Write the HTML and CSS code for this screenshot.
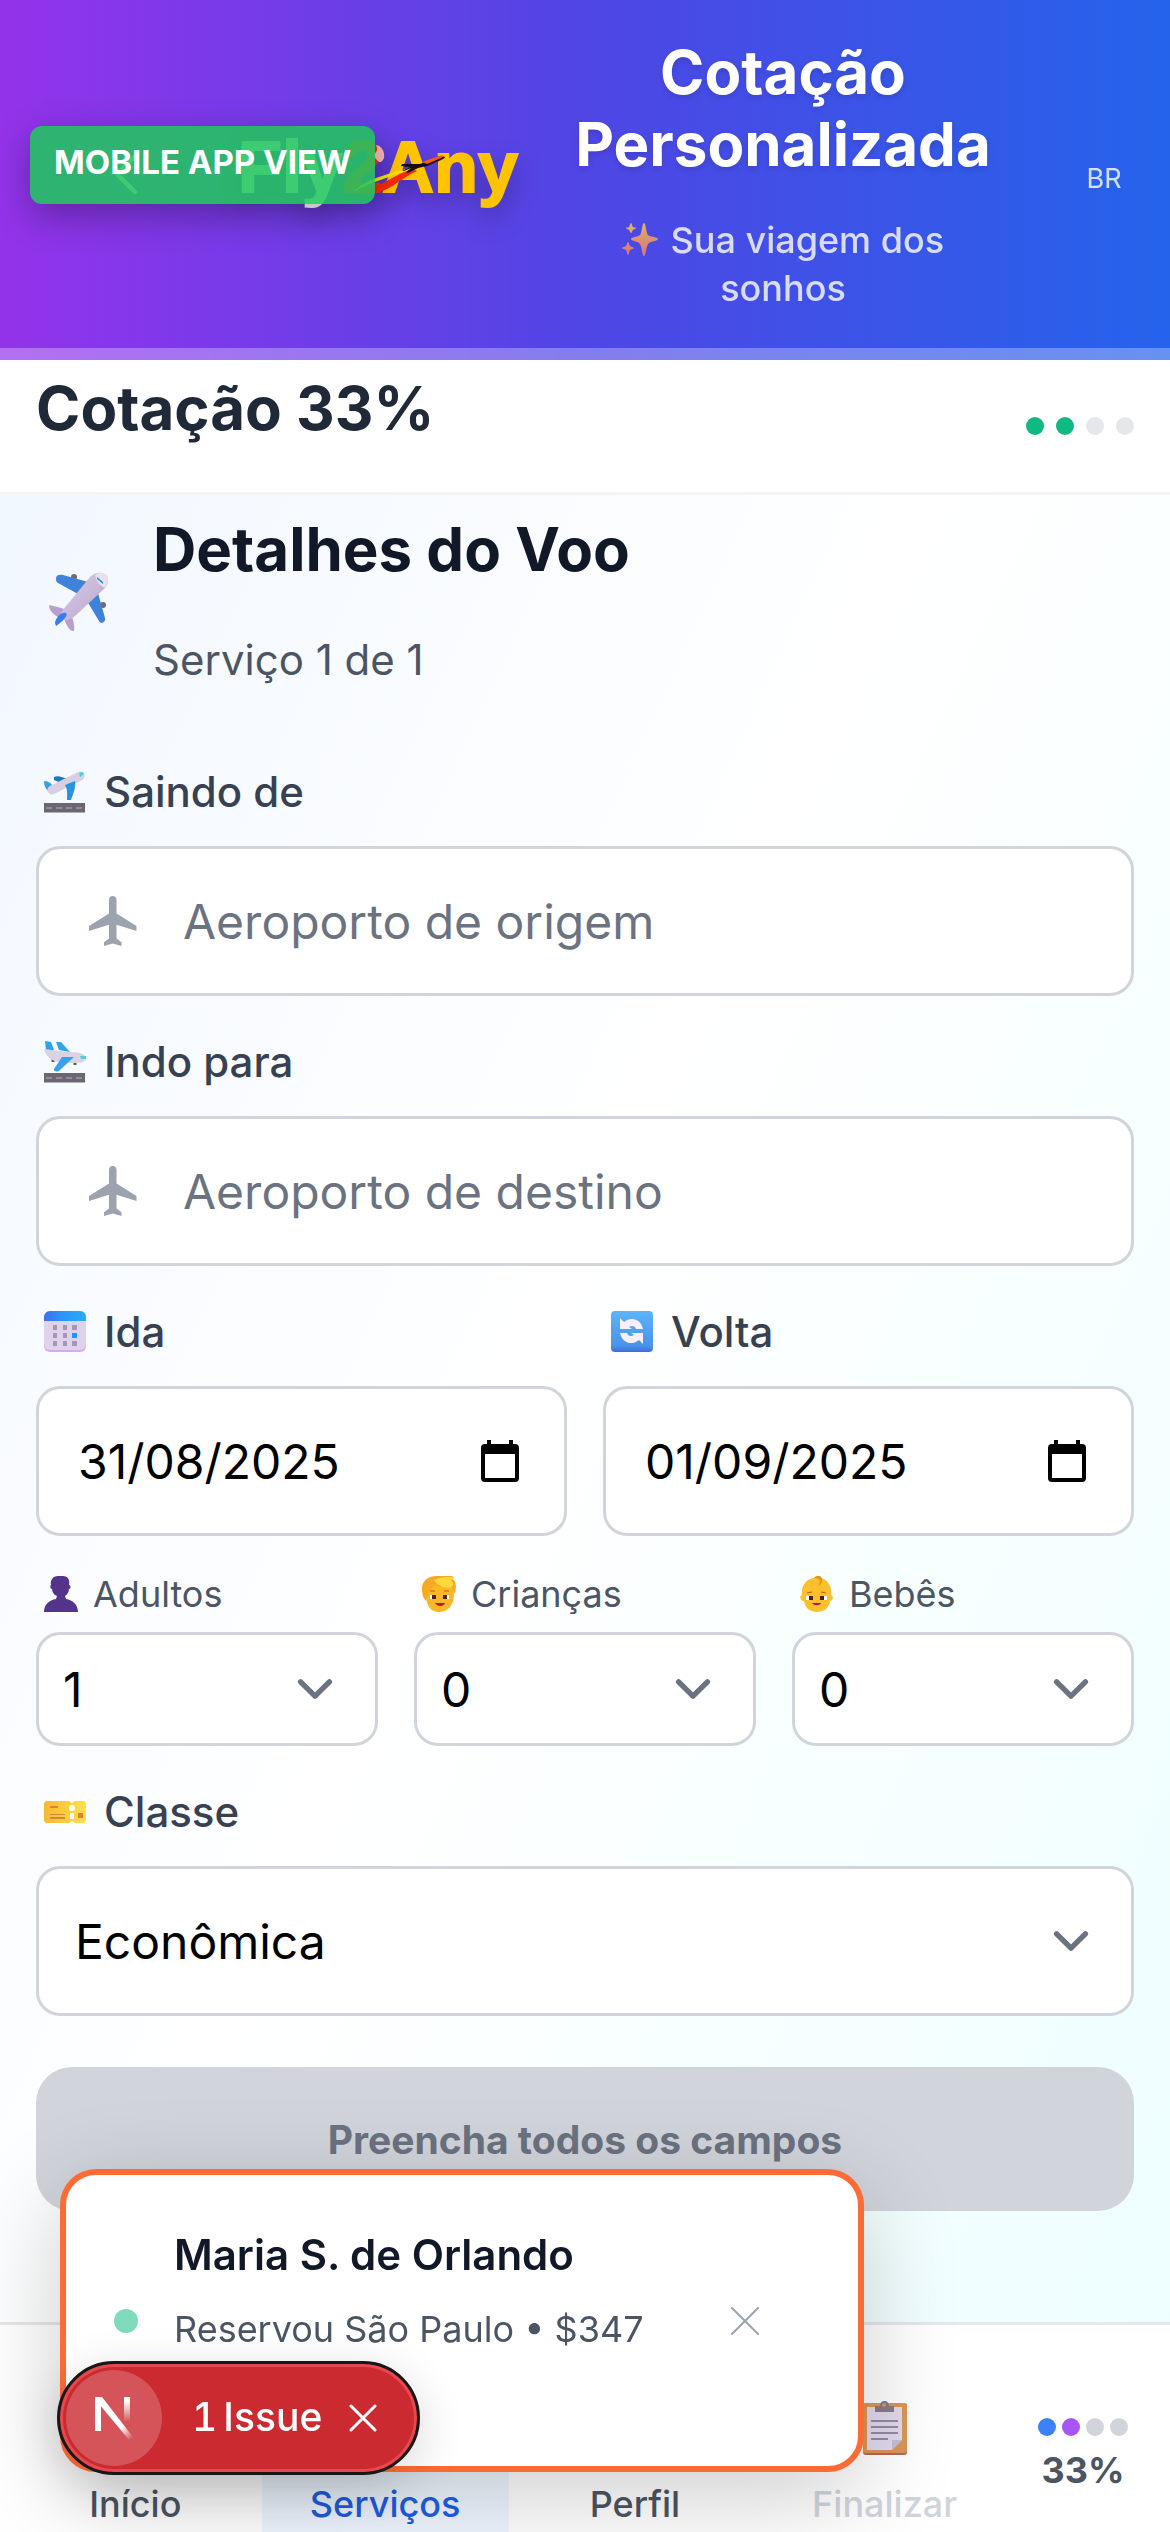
FILE: index.html
```html
<!DOCTYPE html>
<html lang="pt-BR">
<head>
<meta charset="utf-8">
<meta name="viewport" content="width=device-width, initial-scale=1">
<title>Cotação Personalizada</title>
<link rel="stylesheet" href="styles.css">
</head>
<body>
<header class="hero">
  <div class="hero-bar">
    <button class="back" type="button" aria-label="Voltar">
      <svg width="72" height="72" viewBox="0 0 24 24" fill="none" stroke="#fff" stroke-width="1.5" stroke-linecap="round" stroke-linejoin="round"><path d="M15 18l-6-6 6-6"/></svg>
    </button>
    <svg class="logo" width="324" height="120" viewBox="0 0 324 120" role="img" aria-label="Fly2Any">
      <text class="logo-text" x="22" y="78"><tspan class="logo-fly">Fly</tspan><tspan class="logo-two">2</tspan><tspan class="logo-any">Any</tspan></text>
      <path d="M160 31c6 1 9 7 8 13-2 5-5 5-7 2-3-3-3-5-1-8 2-2 1-4 0-7z" fill="#fbb8ae"/>
      <path d="M135 80c20-2 40-16 60-26l6 3c-18 8-28 22-48 23z" fill="#fb2a05"/>
      <path d="M137 78c18-16 38-18 59-25l2 2c-20 6-40 12-61 23z" fill="#ffe600"/>
      <path d="M186 57l8-4-9-1 1-2h18l8-3c7-4 13-6 17-4 0 1-2 2-6 4l-12 5-9 2-10 5-2-1 5-4-7 3z" fill="#140d0d"/>
      <path d="M206 48l17-6c5-1 6 0 2 2l-14 6z" fill="#fb5a10"/>
    </svg>
    <div class="hero-copy">
      <h1 class="hero-title">Cotação Personalizada</h1>
      <p class="hero-sub"><svg class="sparkles" width="36" height="33" viewBox="0 0 36 33" aria-hidden="true"><defs><linearGradient id="spark" x1="0" y1="0" x2="0" y2="1"><stop offset="0" stop-color="#ffcf4a"/><stop offset="1" stop-color="#ff7d5c"/></linearGradient></defs><path fill="url(#spark)" d="M22 0c2 0 2 10 4 12s10 2 10 4-8 2-10 5-2 12-4 12-2-9-4-12-9-3-9-5 7-2 9-4 2-12 4-12zM9 0c1 0 1 3 2 4s3 0 3 1-2 1-3 2-1 3-2 3-1-2-2-3-3-1-3-2 2 0 3-1 1-4 2-4zM6 19c1 0 1 3 2 4s4 1 4 2-3 1-4 2-1 5-2 5-1-4-2-5-4-1-4-2 3-1 4-2 1-4 2-4z"/></svg> Sua viagem dos sonhos</p>
    </div>
    <span class="locale">BR</span>
  </div>
  <div class="hero-strip"></div>
  <div class="view-badge">MOBILE APP VIEW</div>
</header>

<section class="status">
  <h2 class="status-title">Cotação 33%</h2>
  <div class="dots dots-wide"><i class="dot green"></i><i class="dot green"></i><i class="dot pale"></i><i class="dot pale"></i></div>
</section>

<main class="content">
  <div class="service">
    <svg class="service-icon" width="60" height="60" viewBox="0 0 60 60" aria-hidden="true">
      <defs><linearGradient id="body" x1="0" y1="0" x2="1" y2="1"><stop offset="0" stop-color="#d9cfe8"/><stop offset="1" stop-color="#b9a3cc"/></linearGradient></defs>
      <circle cx="26" cy="5" r="3" fill="#6d6a75"/><circle cx="55" cy="33" r="3" fill="#6d6a75"/>
      <path d="M8 6c0-3 4-4 7-3l25 7-10 12L10 11c-2-1-2-3-2-5z" fill="#3f82da"/>
      <path d="M50 21l7 25c1 4-4 7-6 3L39 29z" fill="#3f82da"/>
      <path d="M1 33c5 1 10 2 15 4l-3 10C8 44 1 40 1 33zM16 46l8-2c1 5 3 10 2 15-4 1-8-6-10-13z" fill="#b79fd0"/>
      <path d="M14 39L42 5c5-6 18-6 18 3 0 3-1 6-3 8L27 44c-5 4-10 5-12 3s-3-5-1-8z" fill="url(#body)"/>
      <path d="M47 3c5-4 13-2 13 5 0 3-1 5-3 8-5-2-9-7-10-13z" fill="#e9e0ec"/>
      <path d="M49 5l6 5v2l-6-5z" fill="#1595d3"/>
      <path d="M7 51c0-5 7-12 11-10 3 2-4 9-10 13z" fill="#3a7df0"/>
    </svg>
    <div class="service-copy">
      <h2 class="service-title">Detalhes do Voo</h2>
      <p class="service-step">Serviço 1 de 1</p>
    </div>
  </div>

  <form class="form">
    <div class="field">
      <label class="label" for="from">
        <svg width="42" height="42" viewBox="0 0 42 42" aria-hidden="true"><path d="M0 32h41v9.500H0z" fill="#6a6673"/><path d="M2 37h37" stroke="#b7b3bd" stroke-width="1" stroke-dasharray="6 4"/><path d="M10 6c4-2 8 0 14 2l-5 5-9-4z" fill="#2277b8"/><path d="M0 10c5 0 8 3 10 7l-6 3C1 17 0 14 0 10z" fill="#35a0e0"/><path d="M8 19L36 5" stroke="#d6d0e2" stroke-width="9" stroke-linecap="round"/><path d="M35 2l4-1 1 2-4 3z" fill="#3fd2e6"/><path d="M21 14l10-4c1 7-2 13-4 19h-4c0-5 1-10-2-15z" fill="#2b93dc"/></svg>
        <span>Saindo de</span>
      </label>
      <div class="box">
        <svg class="box-icon" width="60" height="60" viewBox="0 0 24 24" fill="#9ca3af" aria-hidden="true"><path d="M21 16v-2l-8-5V3.500c0-.83-.67-1.500-1.500-1.500S10 2.670 10 3.500V9l-8 5v2l8-2.500V19l-2 1.500V22l3.500-1 3.500 1v-1.500L13 19v-5.500l8 2.500z"/></svg>
        <input class="box-input" id="from" type="text" placeholder="Aeroporto de origem">
      </div>
    </div>

    <div class="field">
      <label class="label" for="to">
        <svg width="42" height="42" viewBox="0 0 42 42" aria-hidden="true"><path d="M0 32h41v9.500H0z" fill="#6a6673"/><path d="M2 37h37" stroke="#b7b3bd" stroke-width="1" stroke-dasharray="6 4"/><path d="M12 1h5l9 10-11-2zM1 0l6 1 3 8-8 1z" fill="#2ea3ee"/><path d="M9 18v3M31 21v3" stroke="#5b5663" stroke-width="3"/><path d="M0 8l24 3c9 0 18 1 18 6 0 4-5 5-12 5-12 0-27 0-30-14z" fill="#d9d3e3"/><path d="M36 15h6v3h-5z" fill="#48d0e4"/><path d="M18 16h12L16 29c-3 3-7 1-6-1z" fill="#36a2ee"/></svg>
        <span>Indo para</span>
      </label>
      <div class="box">
        <svg class="box-icon" width="60" height="60" viewBox="0 0 24 24" fill="#9ca3af" aria-hidden="true"><path d="M21 16v-2l-8-5V3.500c0-.83-.67-1.500-1.500-1.500S10 2.670 10 3.500V9l-8 5v2l8-2.500V19l-2 1.500V22l3.500-1 3.500 1v-1.500L13 19v-5.500l8 2.500z"/></svg>
        <input class="box-input" id="to" type="text" placeholder="Aeroporto de destino">
      </div>
    </div>

    <div class="row">
      <div class="field">
        <label class="label" for="depart">
          <svg width="42" height="42" viewBox="0 0 42 42" aria-hidden="true"><defs><linearGradient id="cal" x1="0" y1="0" x2="1" y2="0"><stop offset="0" stop-color="#3f6fe6"/><stop offset=".4" stop-color="#2c92fb"/><stop offset="1" stop-color="#27acfc"/></linearGradient></defs><rect width="42" height="41" rx="6" fill="#d9a8f5"/><rect width="42" height="39" rx="6" fill="#dfd2ec"/><path d="M0 10V6a6 6 0 0 1 6-6h30a6 6 0 0 1 6 6v4z" fill="url(#cal)"/><path d="M9 14h4v5H9zM19 14h4v5h-4zM28 14h5v5h-5zM9 22h4v5H9zM19 22h4v5h-4zM9 30h4v5H9zM19 30h4v5h-4zM28 30h5v5h-5z" fill="#a695b4"/><path d="M28 22h5v5h-5z" fill="#2c92fb"/></svg>
          <span>Ida</span>
        </label>
        <div class="box date">
          <input class="box-input" id="depart" type="text" value="31/08/2025">
          <button class="picker" type="button" aria-label="Abrir calendário"><svg width="38" height="42" viewBox="0 0 38 42"><path d="M6 0h4v4h18V0h4v4h2a4 4 0 0 1 4 4v30a4 4 0 0 1-4 4H4a4 4 0 0 1-4-4V8a4 4 0 0 1 4-4h2zM4 14v24h30V14z"/></svg></button>
        </div>
      </div>
      <div class="field">
        <label class="label" for="return">
          <svg width="42" height="42" viewBox="0 0 42 42" aria-hidden="true"><defs><linearGradient id="ref" x1="0" y1="0" x2="0" y2="1"><stop offset="0" stop-color="#5cb4fb"/><stop offset=".85" stop-color="#4a93ea"/><stop offset="1" stop-color="#3a6fd2"/></linearGradient></defs><rect width="42" height="41" rx="4" fill="url(#ref)"/><path d="M9 7l4 4c7-6 17-3 19 7h-7c-1-3-4-4-7-2l3 2H9zM32 33l-4-4c-7 6-17 3-19-7h7c1 3 4 4 7 2l-3-2h12z" fill="#fbeeff"/></svg>
          <span>Volta</span>
        </label>
        <div class="box date">
          <input class="box-input" id="return" type="text" value="01/09/2025">
          <button class="picker" type="button" aria-label="Abrir calendário"><svg width="38" height="42" viewBox="0 0 38 42"><path d="M6 0h4v4h18V0h4v4h2a4 4 0 0 1 4 4v30a4 4 0 0 1-4 4H4a4 4 0 0 1-4-4V8a4 4 0 0 1 4-4h2zM4 14v24h30V14z"/></svg></button>
        </div>
      </div>
    </div>

    <div class="row">
      <div class="field">
        <label class="label small" for="adults">
          <svg width="34" height="36" viewBox="0 0 34 36" aria-hidden="true"><path d="M0 36c0-7 5-12 12-13l1-3c-3-1-5-4-5-7-2 0-2-4-1-4C6 4 9 0 14 0h5c5 0 7 4 6 9 2 0 2 4 0 4 0 3-2 6-4 7l1 3c7 1 12 6 12 13z" fill="#54348a"/></svg>
          <span>Adultos</span>
        </label>
        <select class="select" id="adults"><option>1</option><option>2</option></select>
      </div>
      <div class="field">
        <label class="label small" for="children">
          <svg width="34" height="36" viewBox="0 0 34 36" aria-hidden="true"><path d="M4 18c0-9 6-13 14-13s14 4 14 13c0 11-6 18-15 18S4 29 4 18z" fill="#fbb826"/><path d="M0 14C-1 4 8-1 18 0h12c2 1 2 2 1 3 4 4 3 9 2 15l-3-6c-6 1-12 0-16-3-3 2-6 4-7 8l-3 8c-3-3-4-7-4-11z" fill="#f8a924"/><path d="M12 4c6-3 12-3 18-3 3 1 0 3-1 4 4 2 2 6-1 7-5 0-12-1-16-8z" fill="#ffd83a"/><path d="M8 19h6v4H8zM21 19h6v4h-6z" fill="#fff"/><path d="M10 19h4v4h-4zM21 19h4v4h-4z" fill="#4a2418"/><path d="M8 15h5M22 15h5" stroke="#c8591a" stroke-width="1"/><path d="M13 27h10c-1 4-8 4-10 0z" fill="#b01848"/></svg>
          <span>Crianças</span>
        </label>
        <select class="select" id="children"><option>0</option><option>1</option></select>
      </div>
      <div class="field">
        <label class="label small" for="babies">
          <svg width="34" height="36" viewBox="0 0 34 36" aria-hidden="true"><path d="M2 19C1 8 7 3 14 2c2-3 6-3 7 0 7 2 11 8 10 17 3 1 2 6-1 6-1 7-6 11-13 11S5 32 4 25c-4 0-5-5-2-6z" fill="#fdc02d"/><path d="M14 2c6 0 7 4 4 8 5-2 5-7 3-9-2-2-5-1-7 1z" fill="#e89422"/><path d="M6 20h7v4H6zM20 20h7v4h-7z" fill="#fff"/><path d="M9 20h4v4H9zM20 20h4v4h-4z" fill="#4a2418"/><path d="M7 17l5-1M21 16l5 1" stroke="#c8591a" stroke-width="1"/><path d="M12 27h9c-1 3-7 3-9 0z" fill="#b01848"/></svg>
          <span>Bebês</span>
        </label>
        <select class="select" id="babies"><option>0</option><option>1</option></select>
      </div>
    </div>

    <div class="field">
      <label class="label" for="cabin">
        <svg width="42" height="22" viewBox="0 0 42 22" aria-hidden="true"><defs><linearGradient id="tic" x1="0" y1="0" x2="1" y2="0"><stop offset="0" stop-color="#f5b932"/><stop offset="1" stop-color="#ffe14a"/></linearGradient></defs><path d="M2 0h23l3 2 3-2h9l2 2v18l-2 2h-9l-3-2-3 2H2l-2-2V2z" fill="url(#tic)"/><path d="M6 5h8v2H6zM6 13h15v1H6zM6 16h15v2H6zM34 12h5v5h-5z" fill="#d98238"/><circle cx="28" cy="7" r="3" fill="#fcfdff"/><rect x="26" y="12" width="4" height="6" rx="1" fill="#fcfdff"/></svg>
        <span>Classe</span>
      </label>
      <select class="select large" id="cabin"><option>Econômica</option><option>Executiva</option></select>
    </div>

    <button class="submit" type="submit" disabled>Preencha todos os campos</button>
  </form>
</main>

<nav class="tabs">
  <div class="tab-list">
    <a class="tab" href="#inicio">Início</a>
    <a class="tab active" href="#servicos">Serviços</a>
    <a class="tab" href="#perfil">Perfil</a>
    <a class="tab muted" href="#finalizar">
      <svg width="44" height="54" viewBox="0 0 44 54" aria-hidden="true"><rect y="2" width="44" height="52" rx="3" fill="#b4685a"/><rect y="2" width="44" height="50" rx="3" fill="#dd9657"/><path d="M4 6h35v33L29 49H4z" fill="#e2daee"/><path d="M29 49V39h10z" fill="#c6bed8"/><path d="M12 11V5h5c0-7 9-7 9 0h5v6z" fill="#8b7b86"/><circle cx="21" cy="4" r="2" fill="#dd9657"/><path d="M8 20h27M8 26h27M8 32h27M8 38h17" stroke="#968ba3" stroke-width="2"/></svg>
      Finalizar
    </a>
  </div>
  <div class="progress">
    <div class="dots"><i class="dot blue"></i><i class="dot purple"></i><i class="dot gray"></i><i class="dot gray"></i></div>
    <strong class="progress-value">33%</strong>
  </div>
</nav>

<aside class="toast">
  <i class="toast-dot"></i>
  <div class="toast-copy">
    <p class="toast-title">Maria S. de Orlando</p>
    <p class="toast-text">Reservou São Paulo • $347</p>
  </div>
  <button class="toast-close" type="button" aria-label="Fechar"><svg width="28" height="28" viewBox="0 0 28 28" stroke="#9ca3af" stroke-width="2"><path d="M0 0l28 28M28 0L0 28"/></svg></button>
</aside>

<div class="issues">
  <span class="issues-logo"><svg width="40" height="44" viewBox="0 0 40 44" fill="none" aria-hidden="true"><defs><linearGradient id="n1" x1="16" y1="20" x2="38" y2="43" gradientUnits="userSpaceOnUse"><stop offset=".5" stop-color="#fff"/><stop offset="1" stop-color="#fff" stop-opacity="0"/></linearGradient><linearGradient id="n2" x1="0" y1="0" x2="0" y2="26" gradientUnits="userSpaceOnUse"><stop offset=".2" stop-color="#fff"/><stop offset="1" stop-color="#fff" stop-opacity="0"/></linearGradient></defs><path d="M1 35V1h6v34z" fill="#fff"/><path d="M1 1h7l31 40-4 3L1 3z" fill="url(#n1)"/><path d="M30 1h6v25h-6z" fill="url(#n2)"/></svg></span>
  <button class="issues-open" type="button"><span class="issues-count">1</span> Issue</button>
  <button class="issues-close" type="button" aria-label="Dispensar"><svg width="28" height="28" viewBox="0 0 28 28" stroke="#fff" stroke-width="3" stroke-linecap="round"><path d="M2 2l24 24M26 2L2 26"/></svg></button>
</div>
</body>
</html>
```
FILE: styles.css
```css
* {
  box-sizing: border-box;
  margin: 0;
}

body {
  min-height: 100vh;
  display: flex;
  flex-direction: column;
  background: linear-gradient(to bottom right, #eff6ff, #fff 50%, #ecfeff);
  color: #111827;
  font-family: Inter, "Liberation Sans", sans-serif;
  font-size: 48px;
}

button,
input,
select {
  border: 0;
  padding: 0;
  background: none;
  color: inherit;
  font: inherit;
}

svg {
  display: block;
  flex: none;
}

/* Header */
.hero {
  position: relative;
  background: linear-gradient(to right, #9333ea, #4f46e5 50%, #2563eb);
  color: #fff;
}

.hero-bar {
  display: grid;
  grid-template-columns: 180px 324px 1fr 60px;
  align-items: center;
  padding: 36px;
}

.back {
  display: flex;
  justify-content: center;
}

.logo {
  overflow: visible;
  filter: drop-shadow(0 12px 12px rgba(0, 0, 0, .25));
}

.logo-text {
  font: bold 72px "Liberation Sans", Arial, sans-serif;
  stroke-width: 2px;
}

.logo-fly { fill: #fff; stroke: #fff; }
.logo-two { fill: #f5330c; stroke: #f5330c; }
.logo-any { fill: #ffc400; stroke: #ffc400; }

.hero-copy {
  padding: 0 60px 0 12px;
  text-align: center;
}

.hero-title {
  margin-bottom: 36px;
  font-size: 60px;
  font-weight: 700;
  line-height: 72px;
  text-shadow: 0 3px 6px rgba(0, 0, 0, .12);
}

.hero-sub {
  padding: 0 36px;
  font-size: 36px;
  font-weight: 500;
  line-height: 48px;
  opacity: .8;
}

.sparkles {
  display: inline-block;
  margin-right: 3px;
  vertical-align: -3px;
}

.locale {
  padding-top: 9px;
  font-size: 27px;
  line-height: 36px;
  text-align: center;
  opacity: .8;
}

.hero-strip {
  height: 12px;
  background: rgba(255, 255, 255, .3);
}

.view-badge {
  position: absolute;
  top: 126px;
  left: 30px;
  padding: 15px 24px 21px;
  border-radius: 12px;
  background: rgba(34, 197, 94, .88);
  box-shadow: 0 12px 36px rgba(0, 0, 0, .3);
  font-size: 33px;
  font-weight: 700;
  line-height: 42px;
  white-space: nowrap;
}

/* Progress summary */
.status {
  display: flex;
  justify-content: space-between;
  align-items: center;
  padding: 12px 36px;
  border-bottom: 3px solid #f3f4f6;
  background: #fff;
}

.status-title {
  margin-bottom: 36px;
  color: #1f2937;
  font-size: 60px;
  font-weight: 700;
  line-height: 72px;
}

.dots {
  display: flex;
  gap: 6px;
}

.dots-wide {
  gap: 12px;
}

.dot {
  width: 18px;
  height: 18px;
  border-radius: 50%;
}

.green { background: #10b981; }
.pale { background: #e5e7eb; }
.blue { background: #3b82f6; }
.purple { background: #a855f7; }
.gray { background: #d1d5db; }

/* Form */
.content {
  flex: 1;
  padding: 18px 36px 111px;
}

.service {
  display: flex;
  align-items: center;
  gap: 45px;
  margin-bottom: 72px;
  padding-left: 12px;
}

.service-title {
  margin-bottom: 45px;
  font-size: 60px;
  font-weight: 700;
  line-height: 72px;
}

.service-step {
  color: #4b5563;
  font-size: 42px;
  line-height: 60px;
}

.form {
  display: flex;
  flex-direction: column;
  gap: 36px;
}

.row {
  display: flex;
  gap: 36px;
}

.field {
  flex: 1;
  min-width: 0;
}

.label {
  display: flex;
  align-items: center;
  gap: 18px;
  margin-bottom: 24px;
  padding-left: 8px;
  color: #374151;
  font-size: 42px;
  font-weight: 500;
  line-height: 60px;
}

.label.small {
  gap: 15px;
  margin-bottom: 16px;
  color: #4b5563;
  font-size: 36px;
  font-weight: 400;
  line-height: 44px;
}

.box {
  display: flex;
  align-items: center;
  gap: 39px;
  height: 150px;
  padding: 0 45px;
  border: 3px solid #d1d5db;
  border-radius: 24px;
  background: #fff;
}

.box.date {
  padding: 0 45px 0 39px;
}

.box-input {
  flex: 1;
  min-width: 0;
  outline: 0;
  color: #000;
}

.box-input::placeholder {
  color: #6b7280;
  opacity: 1;
}

.select {
  display: block;
  width: 100%;
  height: 114px;
  padding: 0 96px 0 24px;
  border: 3px solid #d1d5db;
  border-radius: 24px;
  appearance: none;
  background: #fff url("data:image/svg+xml,%3Csvg xmlns='http://www.w3.org/2000/svg' viewBox='0 0 20 20'%3E%3Cpath fill='none' stroke='%236b7280' stroke-width='1.5' stroke-linecap='round' stroke-linejoin='round' d='M6 8l4 4 4-4'/%3E%3C/svg%3E") no-repeat right 24px center / 72px;
  color: #000;
}

.select.large {
  height: 150px;
  padding-left: 36px;
}

.submit {
  height: 144px;
  margin-top: 15px;
  border-radius: 36px;
  background: #d1d5db;
  color: #6b7280;
  font-size: 39px;
  font-weight: 700;
}

/* Bottom navigation */
.tabs {
  display: flex;
  height: 210px;
  border-top: 3px solid #e5e7eb;
  background: #fff;
}

.tab-list {
  flex: 1;
  display: flex;
  gap: 3px;
  padding: 12px 0 0 12px;
}

.tab {
  flex: 1;
  display: flex;
  flex-direction: column;
  align-items: center;
  justify-content: flex-end;
  gap: 27px;
  padding-bottom: 6px;
  color: #4b5563;
  font-size: 36px;
  font-weight: 500;
  line-height: 44px;
  text-decoration: none;
}

.active {
  background: #eff6ff;
  color: #1d5fe4;
}

.muted {
  color: #d1d5db;
}

.progress {
  display: flex;
  flex-direction: column;
  align-items: center;
  width: 162px;
  padding: 93px 12px 0 0;
}

.progress-value {
  margin-top: 12px;
  color: #4b5563;
  font-size: 36px;
  font-weight: 700;
  line-height: 44px;
}

/* Booking toast */
.toast {
  position: fixed;
  bottom: 60px;
  left: 60px;
  display: flex;
  align-items: center;
  gap: 36px;
  width: 804px;
  padding: 48px 99px 48px 48px;
  border: 6px solid #ff6b35;
  border-radius: 36px;
  background: #fff;
  box-shadow: 0 24px 96px rgba(0, 0, 0, .2);
}

.toast-dot {
  width: 24px;
  height: 24px;
  border-radius: 50%;
  background: #80dabc;
}

.toast-copy {
  flex: 1;
  min-height: 195px;
}

.toast-title {
  margin-bottom: 16px;
  font-size: 42px;
  font-weight: 600;
  line-height: 63px;
}

.toast-text {
  color: #4b5563;
  font-size: 36px;
  line-height: 54px;
}

/* Developer issue pill */
.issues {
  position: fixed;
  bottom: 57px;
  left: 57px;
  display: flex;
  align-items: center;
  width: 363px;
  height: 114px;
  padding: 3px;
  border: 3px solid #171717;
  border-radius: 57px;
  background: #ca2a30;
  box-shadow: inset 0 0 0 3px #e5484d, 0 12px 48px rgba(0, 0, 0, .16);
  color: #fff;
}

.issues-logo {
  display: flex;
  align-items: center;
  justify-content: center;
  width: 96px;
  height: 96px;
  margin-left: 3px;
  border-radius: 50%;
  background: rgba(255, 255, 255, .2);
}

.issues-open {
  display: flex;
  gap: 6px;
  margin: 0 27px 3px 30px;
  font-size: 39px;
  font-weight: 500;
  white-space: nowrap;
}

.issues-count {
  font-variant-numeric: tabular-nums;
}
```
